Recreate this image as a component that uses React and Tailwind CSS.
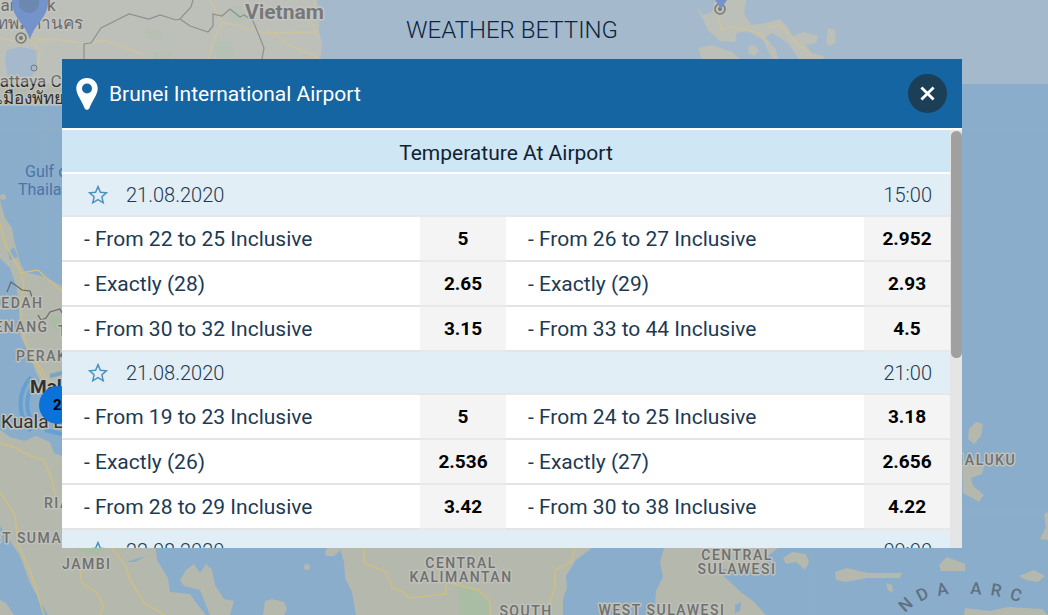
import { useState } from "react";

const groups = [
    {
        date: "21.08.2020",
        time: "15:00",
        rows: [
            ["From 22 to 25 Inclusive", "5", "From 26 to 27 Inclusive", "2.952"],
            ["Exactly (28)", "2.65", "Exactly (29)", "2.93"],
            ["From 30 to 32 Inclusive", "3.15", "From 33 to 44 Inclusive", "4.5"],
        ],
    },
    {
        date: "21.08.2020",
        time: "21:00",
        rows: [
            ["From 19 to 23 Inclusive", "5", "From 24 to 25 Inclusive", "3.18"],
            ["Exactly (26)", "2.536", "Exactly (27)", "2.656"],
            ["From 28 to 29 Inclusive", "3.42", "From 30 to 38 Inclusive", "4.22"],
        ],
    },
    { date: "22.08.2020", time: "09:00", rows: [] },
];

function MapBackground() {
    return (
        <svg
            className="absolute inset-0 h-full w-full"
            viewBox="0 0 1048 615"
            preserveAspectRatio="xMidYMid slice"
            aria-hidden="true"
        >
            <rect width="1048" height="615" fill="#8aadcb" />

            {/* land */}
            <g fill="#b5b8ad">
                <path d="M0 0H316L320 12L319 30L322 45L320 62H62V106H0V82L6 72L5 62L7 50L20 47L36 50L37 70L36 76L6 78L0 84Z" />
                <path d="M0 200L5 218L12 228L14 240L20 262L25 272L45 277L62 286V408L50 402L36 372L28 352L20 335L19 305L16 285L10 268L0 258Z" />
                <path d="M0 430L10 437L24 441L36 436L50 442L54 453L62 456V540H155L157 560L168 578L170 592L190 594L197 604L206 615H48L30 583L20 556L10 541L0 526Z" />
                <path d="M0 600L6 603L14 615H0Z" />
                <path d="M180 580L186 570L194 564L200 573L206 564L212 570L215 585L224 599L234 601L230 615H210L200 590L184 586Z" />
                <path d="M265 601L272 599L284 602L287 608L284 615H263Z" />
                <path d="M325 552L327 548H343L334 556L326 556Z" />
                <path d="M340 548H592L576 560L566 576L567 588L563 599V615H356L352 592L345 578L344 562Z" />
                <path d="M664 548L660 562L663 577L656 591L655 605L646 615H766L753 601L742 593L729 581L715 568L734 570L752 573L763 565L768 556L778 548Z" />
                <path d="M783 558L792 552L806 554L809 562L805 570L796 562L786 564Z" />
                <path d="M696 5L703 15L712 12L715 0H746L744 14L752 25L765 23L780 19L788 27L792 36L804 32L818 36L816 43L806 45L812 53L824 56L822 61H800L788 43L772 33L764 39L776 49L778 59H772L763 40L748 31L737 33L735 42L720 41L708 30Z" />
                <path d="M698 48L712 45L732 52L742 61H702Z" />
                <path d="M828 28L835 30L836 42L831 46L826 43Z" />
                <path d="M749 46L755 45L759 51L754 56L748 53Z" />
                <path d="M969 429L976 422L983 424L981 436L974 444L968 439Z" />
                <path d="M962 462L975 459L984 467L982 474L971 478L973 486L984 495L979 502L963 493Z" />
                <path d="M835 572L847 568L868 573L902 573L900 578L868 578L845 582L836 580Z" />
                <path d="M886 583L892 585L893 593L888 590Z" />
                <path d="M939 565L947 557L965 564V571L941 571Z" />
                <path d="M1019 576L1034 570L1045 576L1038 582L1026 580Z" />
                <path d="M1044 514L1048 512V540L1040 539L1046 527Z" />
                <path d="M965 608L990 611L1008 607L1042 609L1048 615H964Z" />
                <circle cx="307" cy="567" r="3" />
                <circle cx="3" cy="197" r="3" />
            </g>

            {/* lakes and parks */}
            <path d="M8 252L14 247L18 257L10 260Z" fill="#8aadcb" />
            <path d="M126 562L146 556L135 562Z" fill="#8aadcb" />
            <path d="M735 605L741 602L740 611L735 613Z" fill="#8aadcb" />
            <path d="M5 62L7 50L20 47L36 50L37 66L32 76L8 78Z" fill="#8aadcb" />
            <g fill="#a4bda0" opacity=".7">
                <path d="M458 586L474 589L490 603L488 615H460Z" />
                <path d="M75 548H105L98 554L82 552Z" />
                <path d="M145 28L160 30L165 40L147 38Z" />
                <path d="M155 52L172 53L170 59H153Z" />
                <path d="M212 42H232L236 58H218Z" />
                <path d="M228 8L240 6L247 16L240 24L230 20Z" />
                <path d="M50 317L61 315V330L52 326Z" />
            </g>

            {/* roads */}
            <g fill="none" stroke="#cdbf83" strokeWidth="1.5">
                <path d="M0 38L18 42L32 38L60 40L88 44L105 40L125 48L145 55" />
                <path d="M30 40L40 50L38 66M36 38L45 42" />
                <path d="M210 0L222 22L214 40L208 59M222 22L265 33L318 32M268 30L290 45L318 57M316 0L310 20L320 40" />
                <path d="M0 224L6 246L20 270L24 284L20 305L24 338L36 365L52 396L62 404" />
                <path d="M20 273L38 270L62 292M36 361L50 383" />
                <path d="M0 443L16 448L30 456L44 460L52 480L55 495" />
                <path d="M0 492L15 515L18 545L30 570L44 615" />
                <path d="M112 548L125 565L130 580L144 603L165 615" />
                <path d="M80 570L82 583L96 592L104 606L100 615" />
                <path d="M364 548V563L385 571L393 588L404 592L408 598L428 596L446 594V582L478 590L490 601V615" />
                <path d="M575 548L571 562L555 570V588L549 604" />
                <path d="M716 8L722 30L734 27L745 30L760 33L770 44M768 27L780 25L798 44L812 56" />
            </g>
            <path
                d="M84 59V44L91 43L101 28L129 14L149 19L160 15L176 20L180 19L191 7L193 0M180 19L190 26L208 32L213 26V14L222 16L230 9L240 17L244 15L253 21L258 33L264 48L262 59M7 292L11 282L22 290L30 291L32 297M38 315L41 320L46 318L50 312L60 309L62 313"
                fill="none"
                stroke="#666a66"
                strokeWidth="1.2"
            />
            <g stroke="#a0b4c4" strokeWidth="1" opacity=".35">
                <path d="M46 105V285M0 129H62M962 129H1048M813 548V615M962 512H1048" />
            </g>

            {/* cluster of venues around Kuala Lumpur */}
            <g fill="none" stroke="#4193da" strokeWidth="4" opacity=".5">
                <path d="M36 382A32 32 0 0 0 36 426M31 377A40 40 0 0 0 31 431M50 376L62 373M45 430L62 434" />
            </g>

            {/* labels */}
            <g
                fontFamily="Roboto, 'Noto Sans', sans-serif"
                fontSize="14"
                fontWeight="500"
                fill="#6f7070"
                stroke="#c0c2bb"
                strokeWidth="3"
                strokeLinejoin="round"
                paintOrder="stroke"
                letterSpacing="1.5"
            >
                <text x="245" y="19" fontSize="21" fontWeight="700" letterSpacing="0" fill="#3f4243">Vietnam</text>
                <g fontSize="17" fontWeight="400" letterSpacing="0" fill="#2c2f30">
                    <text x="-10" y="11">Bangkok</text>
                    <text x="-36" y="29">กรุงเทพมหานคร</text>
                    <text x="-11" y="87">Pattaya City</text>
                    <text x="-3" y="104">เมืองพัทยา</text>
                </g>
                <g fontSize="16" fontWeight="400" fill="#4b75aa" stroke="none" letterSpacing="0">
                    <text x="25" y="177">Gulf of</text>
                    <text x="18" y="195">Thailand</text>
                </g>
                <text x="-9" y="308">KEDAH</text>
                <text x="-16" y="332">PENANG</text>
                <text x="58" y="336">T</text>
                <text x="16" y="361">PERAK</text>
                <text x="30" y="393" fontSize="19" fontWeight="700" fill="#303334" letterSpacing="0">Malaysia</text>
                <text x="1" y="428" fontSize="19" fontWeight="400" fill="#303334" letterSpacing="0">Kuala L</text>
                <text x="44" y="508">RIAU</text>
                <text x="-31" y="543">WEST SUMATRA</text>
                <text x="62" y="569">JAMBI</text>
                <g textAnchor="middle">
                    <text x="461" y="568">CENTRAL</text>
                    <text x="461" y="582">KALIMANTAN</text>
                    <text x="526" y="616">SOUTH</text>
                    <text x="662" y="615">WEST SULAWESI</text>
                    <text x="737" y="560">CENTRAL</text>
                    <text x="737" y="574">SULAWESI</text>
                </g>
                <text x="951" y="465">MALUKU</text>
                <g fontSize="17" stroke="none" fill="#5f7181" letterSpacing="0">
                    <text transform="translate(905 613) rotate(-42)">N</text>
                    <text transform="translate(920 602) rotate(-27)">D</text>
                    <text transform="translate(938 596) rotate(-12)">A</text>
                    <text transform="translate(970 594) rotate(3)">A</text>
                    <text transform="translate(990 595) rotate(10)">R</text>
                    <text transform="translate(1009 599) rotate(16)">C</text>
                </g>
            </g>

            <g fill="none" stroke="#3f4342">
                <circle cx="21" cy="38" r="5" strokeWidth="1.5" />
                <circle cx="34" cy="68" r="3" />
                <circle cx="720" cy="9" r="5" strokeWidth="1.5" />
            </g>
            <circle cx="21" cy="38" r="2" fill="#3f4342" />
            <circle cx="720" cy="9" r="2" fill="#3f4342" />

            {/* venue pins */}
            <path d="M30 40C26 24 12 18 12 2V-4H48V2C48 18 34 24 30 40Z" fill="#3a6fca" />
            <circle cx="29" cy="3" r="10" fill="#2f5c9f" />
            <path d="M715 0H727L721 9Z" fill="#3a6fca" />
            <circle cx="58" cy="405" r="19" fill="#0a72d8" />
            <text x="53" y="410" fontSize="15" fontWeight="700" fontFamily="Roboto, sans-serif">
                2
            </text>
        </svg>
    );
}

function StarIcon() {
    return (
        <svg className="h-5 w-5" viewBox="0 0 20 20" fill="none" stroke="#4a92bd" strokeWidth="1.5">
            <path d="M10 1.6L12.4 7.2L18.4 7.8L13.9 11.8L15.2 17.8L10 14.7L4.8 17.8L6.1 11.8L1.6 7.8L7.6 7.2Z" />
        </svg>
    );
}

function Outcome({ label, odds }) {
    return (
        <>
            <th scope="row" className="border-b-2 border-[#e4e4e4] p-0 pl-[22px] text-left font-normal">
                - {label}
            </th>
            <td className="border-b-2 border-[#e8e8e8] bg-[#f4f4f4] p-0 text-black">
                <button className="w-full cursor-pointer text-center text-[19px] font-bold">
                    {odds}
                </button>
            </td>
        </>
    );
}

function MarketGroup({ group }) {
    const [starred, setStarred] = useState(false);

    return (
        <tbody>
            <tr className="h-[43px] bg-[#e1eef6] text-[20px]">
                <th colSpan={3} scope="rowgroup" className="border-b-2 border-[#e4e8ea] p-0 font-light">
                    <div className="flex items-center gap-[18px] pl-[26px]">
                        <button
                            aria-label="Add to favourites"
                            aria-pressed={starred}
                            onClick={() => setStarred(!starred)}
                            className="cursor-pointer"
                        >
                            <StarIcon />
                        </button>
                        {group.date}
                    </div>
                </th>
                <td className="border-b-2 border-[#e4e8ea] p-0 pr-[18px] text-right font-light">{group.time}</td>
            </tr>
            {group.rows.map((row) => (
                <tr key={row[0]} className="h-[45px] bg-white">
                    <Outcome label={row[0]} odds={row[1]} />
                    <Outcome label={row[2]} odds={row[3]} />
                </tr>
            ))}
        </tbody>
    );
}

export default function App() {
    const [open, setOpen] = useState(true);

    return (
        <div className="relative min-h-screen overflow-hidden font-[Roboto,'Noto_Sans',sans-serif]">
            <MapBackground />

            <header className="relative h-[84px] bg-[#cbcbcb]/40 pt-[14px] pr-6">
                <h1 className="text-center text-2xl font-light text-[#0c2440]">WEATHER BETTING</h1>
            </header>

            {open && (
                <div className="absolute inset-0 pt-[59px] pr-[86px] pb-[67px] pl-[62px]">
                    <section role="dialog" aria-labelledby="venue" className="flex h-full flex-col bg-white">
                        <div className="flex h-[69px] shrink-0 items-center bg-[#1565a3] pr-[15px] pl-[14px] text-white">
                            <svg className="h-8 w-[22px]" viewBox="0 0 22 32" fill="currentColor" aria-hidden="true">
                                <path
                                    fillRule="evenodd"
                                    d="M11 0C4.9 0 .3 4.6.3 10.5C.3 17 6.2 23 8.5 30C9.3 32.4 12.7 32.4 13.5 30C15.8 23 21.7 17 21.7 10.5C21.7 4.6 17.1 0 11 0ZM11 5.5A5 5 0 1 1 11 15.5A5 5 0 0 1 11 5.5Z"
                                />
                            </svg>
                            <h2 id="venue" className="ml-[11px] flex-1 text-[21px] leading-8">
                                Brunei International Airport
                            </h2>
                            <button
                                aria-label="Close"
                                onClick={() => setOpen(false)}
                                className="flex h-[39px] w-[39px] cursor-pointer items-center justify-center rounded-full bg-[#1b3f56]"
                            >
                                <svg className="h-[15px] w-[15px]" viewBox="0 0 16 16" stroke="currentColor" strokeWidth="3">
                                    <path d="M1.5 1.5L14.5 14.5M14.5 1.5L1.5 14.5" />
                                </svg>
                            </button>
                        </div>

                        <div className="flex min-h-0 flex-1 pt-[2px]">
                            <div className="min-w-0 flex-1 overflow-y-auto text-[21px] leading-6 [scrollbar-width:none]">
                                <h3 className="flex h-[44px] items-center justify-center border-b-2 border-white bg-[#cfe6f4] pt-1 text-[#0f2233]">
                                    Temperature At Airport
                                </h3>
                                <table className="w-full table-fixed border-separate border-spacing-0 text-[#1d3a52]">
                                    <colgroup>
                                        <col />
                                        <col className="w-[86px]" />
                                        <col />
                                        <col className="w-[86px]" />
                                    </colgroup>
                                    {groups.map((group) => (
                                        <MarketGroup key={group.date + group.time} group={group} />
                                    ))}
                                </table>
                            </div>
                            <div className="w-3 bg-[#e5e5e5] pt-px pl-px">
                                <div className="h-[227px] rounded-md bg-[#a0a0a0]" />
                            </div>
                        </div>
                    </section>
                </div>
            )}
        </div>
    );
}
